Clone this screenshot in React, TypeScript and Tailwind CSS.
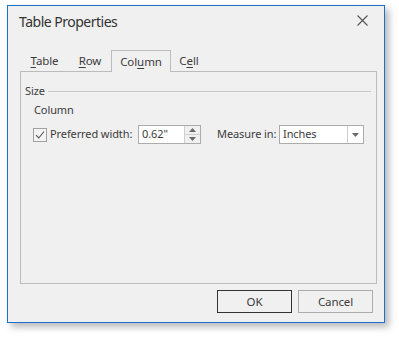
import React from "react";

const Tab = ({ label, selected, w }: { label: [string, string, string]; selected?: boolean; w: string }) => (
  <div
    className={
      "flex items-center justify-center whitespace-nowrap shrink-0 " +
      w +
      (selected
        ? " h-[22px] -mb-px relative z-10 bg-[#f0f0f0] border-l border-t border-r border-[#bcbcbc]"
        : " h-[21px]")
    }
  >
    <span>
      {label[0]}
      <span className="underline underline-offset-2">{label[1]}</span>
      {label[2]}
    </span>
  </div>
);

export default function App() {
  return (
    <div
      className="w-[399px] h-[338px] bg-white pl-[7px] pt-[5px] text-[11px] tracking-[-0.1px] text-[#3c3c3c]"
      style={{ fontFamily: '"Noto Sans", "Open Sans", sans-serif' }}
    >
      <div className="w-[378px] h-[318px] border border-[#1a72c8] bg-[#f0f0f0] shadow-[4px_4px_7px_rgba(0,0,0,0.28)] flex flex-col">
        {/* title */}
        <div className="h-[30px] flex items-center justify-between pl-[11px] pr-[16px]">
          <span className="text-[14px] tracking-[-0.5px] text-[#333]">Table Properties</span>
          <svg width="11" height="11" viewBox="0 0 11 11" className="mt-[-1px]">
            <path d="M0.5 0.5 L10.5 10.5 M10.5 0.5 L0.5 10.5" stroke="#555" strokeWidth="1.1" />
          </svg>
        </div>
        {/* tabs */}
        <div className="mt-[14px] ml-[12px] flex items-end h-[21px] text-[11.5px]">
          <Tab label={["", "T", "able"]} w="w-[49px]" />
          <Tab label={["", "R", "ow"]} w="w-[42px]" />
          <Tab label={["Col", "u", "mn"]} w="w-[60px]" selected />
          <Tab label={["C", "e", "ll"]} w="w-[36px]" />
        </div>
        {/* panel */}
        <div className="ml-[12px] w-[357px] h-[213px] border border-[#bcbcbc] flex flex-col">
          <div className="mt-[11px] pl-[4px] pr-[5px] h-[16px] flex items-center gap-[3px]">
            <span>Size</span>
            <div className="flex-1 h-px bg-[#c8c8c8]" />
          </div>
          <div className="mt-[3px] pl-[13px] h-[16px] flex items-center">Column</div>
          <div className="mt-[7px] pl-[12px] h-[19px] flex items-center whitespace-nowrap">
            <div className="shrink-0 w-[14px] h-[14px] border border-[#a0a0a0] bg-[#f4f4f4] flex items-center justify-center">
              <svg width="10" height="10" viewBox="0 0 10 10">
                <path d="M1 5.2 L3.8 8 L9 1.5" fill="none" stroke="#555" strokeWidth="1.1" />
              </svg>
            </div>
            <span className="shrink-0 ml-[3px] w-[88px]">Preferred width:</span>
            <div className="shrink-0 w-[63px] h-[19px] border border-[#acacac] bg-white flex">
              <div className="flex-1 flex items-center pl-[3px]">0.62"</div>
              <div className="w-[16px] border-l border-[#cfcfcf] bg-[#f0f0f0] flex flex-col">
                <div className="flex-1 flex items-center justify-center border-b border-[#cfcfcf]">
                  <svg width="7" height="4" viewBox="0 0 7 4"><path d="M0 4 L3.5 0 L7 4 Z" fill="#6a6a6a" /></svg>
                </div>
                <div className="flex-1 flex items-center justify-center">
                  <svg width="7" height="4" viewBox="0 0 7 4"><path d="M0 0 L7 0 L3.5 4 Z" fill="#6a6a6a" /></svg>
                </div>
              </div>
            </div>
            <span className="shrink-0 ml-[16px] w-[62px]">Measure in:</span>
            <div className="shrink-0 w-[85px] h-[19px] border border-[#acacac] bg-white flex">
              <div className="flex-1 flex items-center pl-[3px]">Inches</div>
              <div className="w-[16px] border-l border-[#cfcfcf] flex items-center justify-center">
                <svg width="7" height="4" viewBox="0 0 7 4"><path d="M0 0 L7 0 L3.5 4 Z" fill="#6a6a6a" /></svg>
              </div>
            </div>
          </div>
        </div>
        {/* buttons */}
        <div className="mt-[6px] flex justify-end gap-[6px] pr-[11px] text-[11.5px]">
          <div className="w-[75px] h-[23px] border border-[#333] flex items-center justify-center">OK</div>
          <div className="w-[75px] h-[23px] border border-[#acacac] flex items-center justify-center">Cancel</div>
        </div>
      </div>
    </div>
  );
}
